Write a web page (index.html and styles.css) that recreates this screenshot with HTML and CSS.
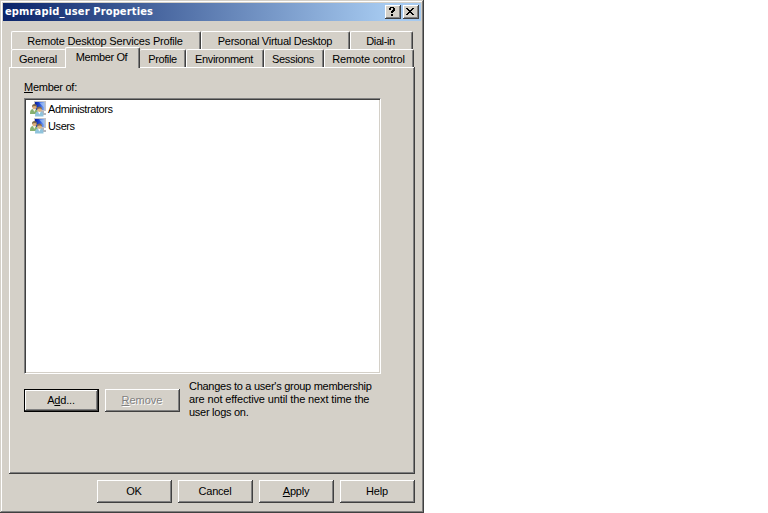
FILE: index.html
```html
<!DOCTYPE html>
<html lang="en">
<head>
<meta charset="utf-8">
<title>epmrapid_user Properties</title>
<link rel="stylesheet" href="styles.css">
</head>
<body>
<svg width="0" height="0" class="defs">
  <defs>
    <linearGradient id="screen"><stop offset="0" stop-color="#0a1fa0"/><stop offset=".5" stop-color="#2450d8"/><stop offset="1" stop-color="#8cb4f4"/></linearGradient>
    <symbol id="group" viewBox="0 0 16 16">
      <path d="M4 0h12v10H4z" fill="#c3c3c6"/>
      <path d="M5 1h9.500v8H5z" fill="url(#screen)"/>
      <path d="M9 1.500l5 5v-5z" fill="#a9c9f5" opacity=".65"/>
      <path d="M10 10h4v2h2v2h-6z" fill="#b4b6bc"/>
      <path d="M0 13c0-4 1-5 4-5s4 2 4 5z" fill="#86b06f"/>
      <path d="M3 8l1.200 3L6 8z" fill="#f3f5ee"/>
      <circle cx="4.500" cy="6" r="2.300" fill="#dcae79"/>
      <path d="M2 6c-.4-4 5.200-4 5 0C6 4.500 3.500 4.500 2 6z" fill="#7d6849"/>
      <path d="M5 15.500c0-4 1-5 4.500-5s4 2 4 5z" fill="#8fc3dc"/>
      <path d="M8 10.500l1.300 3 1.500-3z" fill="#fff"/>
      <circle cx="9.500" cy="8.500" r="2.400" fill="#e0b582"/>
      <path d="M7 8.500c-.4-4 5.200-4 5 0C11 7 8.500 7 7 8.500z" fill="#80694a"/>
    </symbol>
  </defs>
</svg>
<main class="window">
  <header class="titlebar">
    <h1 class="title">epmrapid_user Properties</h1>
    <button class="caption" aria-label="Help"><svg width="12" height="10" viewBox="0 0 12 10" shape-rendering="crispEdges"><path d="M4 0h4v1h1v3H8v1H7v1H5V4h1V3h1V1H5v2H3V1h1zM5 7h2v2H5z"/></svg></button>
    <button class="caption" aria-label="Close"><svg width="12" height="10" viewBox="0 0 12 10" shape-rendering="crispEdges"><path d="M2 1h2v1h1v1h2V2h1V1h2v1H9v1H8v1H7v1h1v1h1v1h1v1H8V7H7V6H5v1H4v1H2V7h1V6h1V5h1V4H4V3H3V2H2z"/></svg></button>
  </header>
  <nav class="tabs">
    <div class="tabrow upper">
      <span class="tab rdsp">Remote Desktop Services Profile</span>
      <span class="tab pvd">Personal Virtual Desktop</span>
      <span class="tab dial">Dial-in</span>
    </div>
    <div class="tabrow">
      <span class="tab general">General</span>
      <span class="tab active">Member Of</span>
      <span class="tab profile">Profile</span>
      <span class="tab environment">Environment</span>
      <span class="tab sessions">Sessions</span>
      <span class="tab remote">Remote control</span>
    </div>
  </nav>
  <section class="panel">
    <div class="label"><u>M</u>ember of:</div>
    <div class="list">
      <div class="item"><svg width="16" height="16"><use href="#group"/></svg><span class="tight">Administrators</span></div>
      <div class="item"><svg width="16" height="16"><use href="#group"/></svg><span class="tight">Users</span></div>
    </div>
    <div class="actions">
      <button class="btn default"><span>A<u>d</u>d...</span></button>
      <button class="btn disabled"><span><u>R</u>emove</span></button>
      <p class="note">Changes to a user's group membership<br><span class="wide">are not effective until the next time the</span><br>user logs on.</p>
    </div>
  </section>
  <footer class="footer">
    <button class="btn">OK</button>
    <button class="btn">Cancel</button>
    <button class="btn"><span><u>A</u>pply</span></button>
    <button class="btn">Help</button>
  </footer>
</main>
</body>
</html>
```
FILE: styles.css
```css
* { box-sizing: border-box; }
body { margin: 0; background: #fff; color: #000; font: 11px/13px "Liberation Sans", Arial, sans-serif; letter-spacing: -.27px; overflow: hidden; }
.defs { display: block; }
u { text-decoration: underline; text-decoration-thickness: 1px; text-underline-offset: 1px; }
.window { width: 424px; height: 513px; padding: 3px; background: #d4d0c8; box-shadow: inset -1px -1px #404040, inset 1px 1px #d4d0c8, inset -2px -2px #808080, inset 2px 2px #fff; }
.titlebar { display: flex; gap: 2px; height: 18px; padding: 2px; width: 418px; background: linear-gradient(90deg, #0a246a, #a6caf0 92%); }
.title { flex: 1; margin: 0; color: #fff; font: bold 11px/14px "DejaVu Sans Condensed", "DejaVu Sans", sans-serif; letter-spacing: .15px; white-space: nowrap; }
button { font: inherit; letter-spacing: -.2px; color: inherit; border: 0; padding: 0; background: #d4d0c8; }
.caption { width: 16px; height: 14px; padding: 2px 0 0 1px; display: flex; box-shadow: inset -1px -1px #404040, inset 1px 1px #fff, inset -2px -2px #808080; }
.tabs { padding: 10px 0 0 8px; height: 46px; }
.tabrow { display: flex; align-items: flex-end; height: 18px; }
.tab { position: relative; height: 18px; line-height: 19px; text-align: center; white-space: nowrap; background: #d4d0c8; border-top: 1px solid #fff; border-left: 1px solid #fff; border-right: 1px solid #404040; box-shadow: inset -1px 0 #808080; border-radius: 2px 2px 0 0; }
.rdsp { width: 190px; padding-right: 2px; letter-spacing: -.19px; }
.pvd { width: 149px; padding-right: 1px; }
.dial { width: 63px; padding-right: 2px; letter-spacing: -.4px; }
.general { width: 55px; padding-right: 2px; letter-spacing: -.15px; border-right: 0; box-shadow: none; }
.active { z-index: 1; width: 75px; height: 21px; margin: 0 0 -1px -1px; padding-right: 2px; letter-spacing: -.4px; }
.profile { width: 46px; letter-spacing: -.4px; border-left: 0; }
.environment { width: 78px; padding-right: 2px; letter-spacing: -.35px; }
.sessions { width: 60px; padding-right: 2px; letter-spacing: -.35px; }
.remote { width: 90px; padding-right: 1px; letter-spacing: -.15px; }
.panel { width: 406px; height: 407px; margin-left: 6px; padding: 14px 15px; box-shadow: inset -1px -1px #404040, inset 1px 1px #fff, inset -2px -2px #808080; }
.label { height: 17px; }
.list { width: 357px; height: 276px; padding: 2px 6px; background: #fff; border: solid; border-width: 1px; border-color: #808080 #fff #fff #808080; box-shadow: inset 1px 1px #404040, inset -1px -1px #d4d0c8; }
.item { display: flex; align-items: center; gap: 2px; height: 17px; }
.item svg { margin: -2px 0 0 -1px; }
.tight { letter-spacing: -.4px; }
.wide { letter-spacing: -.13px; }
.actions { display: flex; gap: 6px; margin-top: 6px; }
.btn { width: 75px; height: 23px; line-height: 23px; padding-right: 1px; text-align: center; box-shadow: inset -1px -1px #404040, inset 1px 1px #fff, inset -2px -2px #808080; }
.actions .btn { margin-top: 9px; }
.default { border: 1px solid #000; line-height: 21px; }
.disabled { color: #808080; letter-spacing: 0; text-shadow: 1px 1px #fff; }
.note { margin: 0 0 0 3px; white-space: nowrap; }
.footer { display: flex; gap: 6px; padding: 6px 0 0 94px; }
```
